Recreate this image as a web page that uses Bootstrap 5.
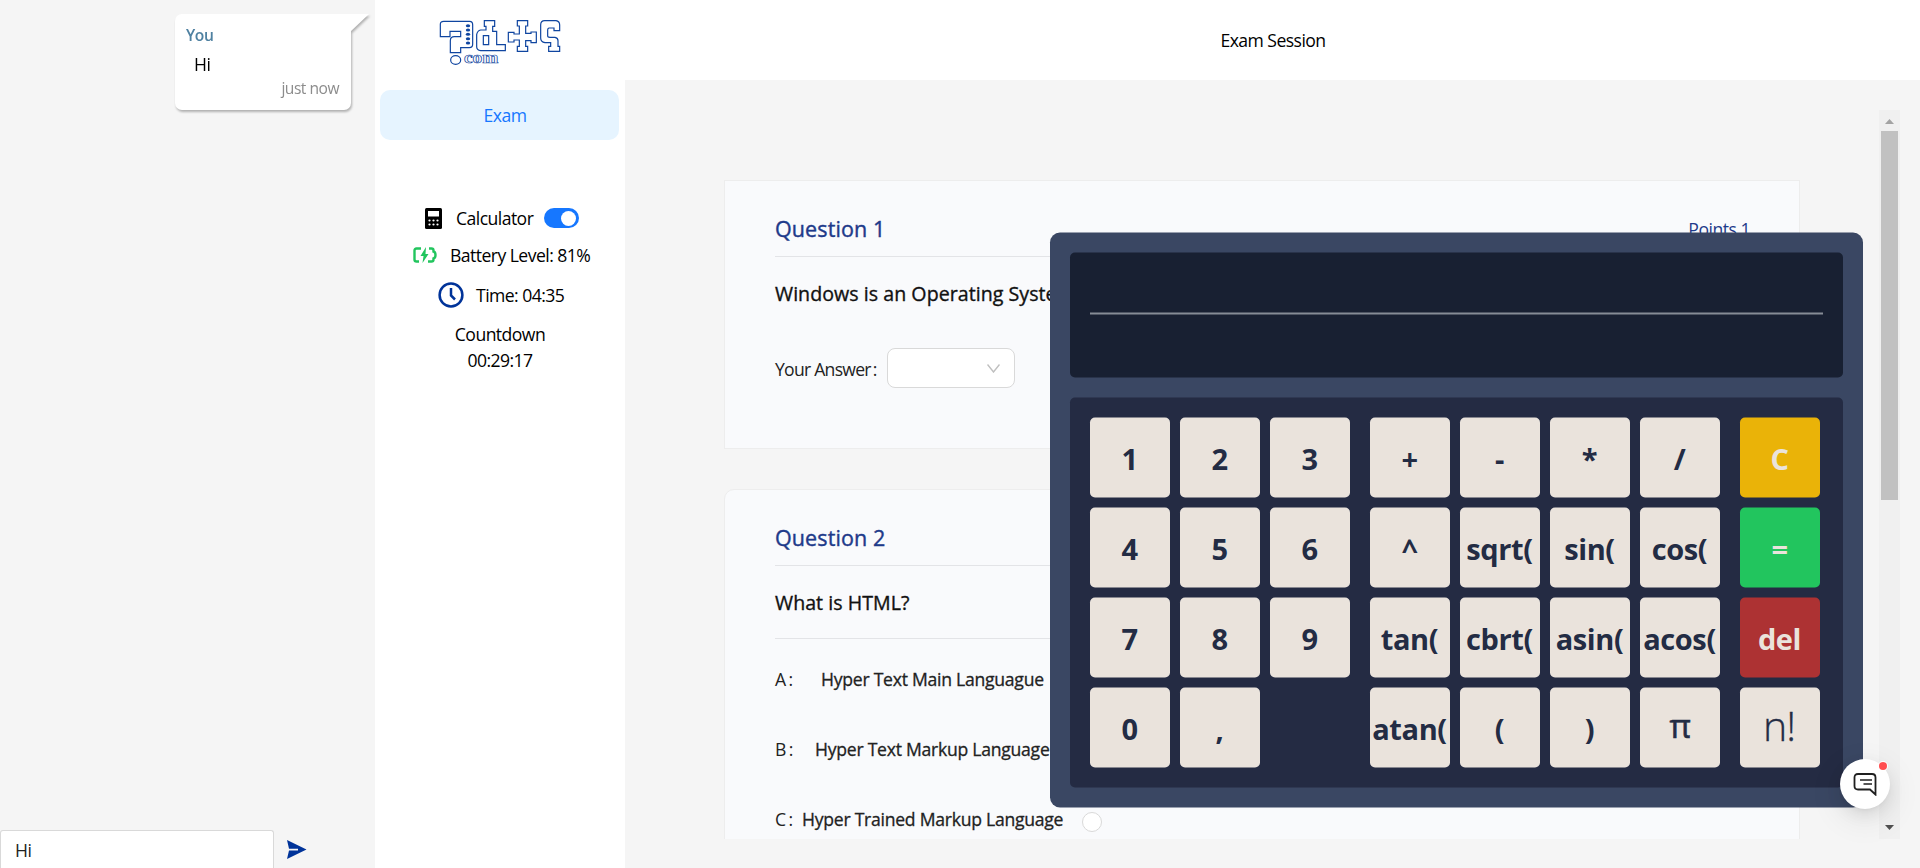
<!DOCTYPE html>
<html lang="en">
<head>
<meta charset="utf-8">
<title>Exam Session</title>
<link href="https://cdn.jsdelivr.net/npm/bootstrap@5.3.0/dist/css/bootstrap.min.css" rel="stylesheet">
<style>
body{font-family:"Open Sans","Noto Sans",sans-serif;font-size:17.6px;line-height:26px;color:#000;background:#f5f5f5;height:868px;overflow:hidden;letter-spacing:-.55px}
span{white-space:nowrap}
.chat-pane{width:375px}
.bubble{width:176px;height:96px;margin:14px 0 0 175px;border-radius:7px;padding:8px 12px;filter:drop-shadow(1px 2px 1px rgba(0,0,0,.28));line-height:27px}
.bubble svg{right:-18px;top:0}
.bubble .who{color:#4f81a1;font-size:15.6px;font-weight:600;letter-spacing:-.4px;margin-left:-1px}
.bubble .said{margin:2px 0 0 7px}
.bubble .when{color:#8c8c8c;font-size:15.6px;line-height:20px;letter-spacing:-.5px}
.composer input{width:274px;height:38px;border:1px solid #d9d9d9;border-bottom:0;border-radius:3px 3px 0 0;padding:1px 14px 0;font-size:17.6px;letter-spacing:-.4px;outline:0;color:#222}
.composer svg{margin:1px 0 0 13px}
.side{width:250px}
.side .logo{margin:10px 0 0 55px}
.side .pill{height:50px;margin:20px 6px 0 5px;padding-left:11px;border-radius:10px;background:#e6f4ff;color:#1677ff}
.tool{height:26px}
.tool-calc{margin:65px 0 0 50px;gap:14px}
.tool-calc span{width:74px}
.tool-power{margin:11px 0 0 38px;gap:13px}
.tool-clock{margin:14px 0 13px 63px;gap:12px}
.toggle{width:35px;height:20px;border-radius:10px;background:#1677ff;padding:2.5px 3px}
.toggle i{width:15px;height:15px;border-radius:50%;background:#fff}
.topbar{height:80px;padding-left:1px}
.scroller{height:729px;margin:30px 20px 0 0}
.rail{width:21px;background:#f0f0f0}
.rail .thumb{width:17px;height:369px;background:#c1c1c1}
.feed{padding:70px 79px 0 99px}
.quiz{background:#f9fafc;border:1px solid #ededed;padding:33px 49px 0 50px}
.quiz-1{height:269px}
.quiz-2{height:500px;margin-top:40px;border-radius:10px}
.quiz .rule{border-bottom:1px solid #e3e4e7}
.quiz .qhead{height:43px}
.quiz h2{font-size:21.5px;font-weight:400;line-height:30px;color:#1e3a8a;margin:0;letter-spacing:.1px;-webkit-text-stroke:.4px #1e3a8a}
.prompt{font-size:19.6px;color:#111;letter-spacing:.04px;-webkit-text-stroke:.35px #111;padding-top:24px}
.prompt.rule{height:73px}
.pts{color:#1e3a8a;line-height:30px;letter-spacing:-.5px}
.answer{margin-top:41px}
.answer label{width:112px;color:#222;letter-spacing:-.75px;padding-top:2px}
.answer label span{margin-left:2px}
.opts{padding-top:5px}
.opt{height:70px;color:#222}
.opt .tag span{margin-left:3px}
.opt .txt{letter-spacing:-.26px;-webkit-text-stroke:.3px #222}
.tag-a{width:46px}
.tag-b{width:40px}
.tag-c{width:27px}
.pick{width:128px;height:40px;border:1px solid #d9d9d9;border-radius:8px;padding-right:14px}
.dotring{width:20px;height:20px;border:1px solid #d9d9d9;border-radius:50%;margin:5px 0 0 19px}
.calc{left:1050px;top:232px;width:813px;height:575px;background:#3a4763;border-radius:10px;padding:20px;transform:translateY(.5px)}
.lcd{height:125px;background:#182032;border-radius:5px;padding:0 20px}
.lcd div{height:62px;border-bottom:2px solid #868c96}
.pad{height:390px;margin-top:20px;padding:20px;background:#242b43;border-radius:5px;gap:20px}
.keys{display:grid;gap:10px;grid-auto-rows:80px}
.k3{grid-template-columns:repeat(3,80px)}
.k4{grid-template-columns:repeat(4,80px)}
.k1{grid-template-columns:80px}
.key{border:0;padding:2px 1px 0 0;border-radius:5px;background:#eae3dc;color:#232c44;font-size:29px;font-weight:700;line-height:40px;letter-spacing:-.4px}
.key.clr{background:#eab308;color:#eae3dc}
.key.eq{background:#22c55e;color:#eae3dc}
.key.del{background:#ad3233;color:#eae3dc}
.key.pi{font-weight:400;font-size:33px;padding:0 0 5px;-webkit-text-stroke:.6px #232c44}
.key.fact{font-weight:300;font-size:41px;padding:0 2px 6px 0;letter-spacing:-1px;-webkit-text-stroke:.3px #232c44}
.fab{left:1840px;top:759px;width:50px;height:50px;box-shadow:0 6px 16px rgba(0,0,0,.08),0 3px 6px -4px rgba(0,0,0,.12),0 9px 28px 8px rgba(0,0,0,.05)}
.fab i{width:8px;height:8px;left:39px;top:3px;background:#ff4d4f;box-shadow:0 0 0 1px #fff}
</style>
</head>
<body class="d-flex position-relative">
<section class="chat-pane d-flex flex-column justify-content-between flex-shrink-0">
  <div class="bubble bg-white d-flex flex-column position-relative">
    <svg class="position-absolute" width="24" height="20"><path d="M0 0H24L5 18V20H0Z" fill="#fff"/></svg>
    <div class="who">You</div>
    <div class="said">Hi</div>
    <div class="when text-end">just now</div>
  </div>
  <div class="composer d-flex align-items-center">
    <input value="Hi" aria-label="Message">
    <svg width="20" height="20" viewBox="0 0 20 20"><path d="M0 0L19.500 9.500L0 19L2 10.500H11V8.700H2Z" fill="#003399"/></svg>
  </div>
</section>
<aside class="side bg-white flex-shrink-0 d-flex flex-column">
  <svg class="logo" width="140" height="60" viewBox="0 0 420 180" fill="none" stroke="#0f45a0" stroke-width="3.6">
    <path d="M31 80V43Q31 34 41 34H119Q128 34 128 44V103Q128 113 118 113H92V128H61V92Q61 80 73 80H92V64H60V80Z"/>
    <g fill="#0f45a0" stroke="none"><ellipse cx="114" cy="47" rx="6.500" ry="4.500"/><ellipse cx="114" cy="60" rx="6.500" ry="4.500"/><ellipse cx="114" cy="73" rx="6.500" ry="4.500"/><ellipse cx="114" cy="86" rx="6.500" ry="4.500"/><ellipse cx="114" cy="99" rx="6.500" ry="4.500"/></g>
    <ellipse cx="77" cy="150" rx="15" ry="13"/>
    <path d="M163 32H194V49H188V64H200V104H226V122H152Q140 120 140 110V74Q142 62 152 60H168V49H163ZM160 77H176V104H160Z"/>
    <path d="M262 32H293V48H287V70H303V66H319V98H303V92H287V109H293V124H262V109H268V90H252V96H235V67H252V72H268V48H262Z"/>
    <path d="M344 32H378Q389 34 389 45V62H372V54H357Q353 55 353 60V78Q353 82 360 82H375Q384 84 384 92V109H389V124H356V109H362V98H345Q332 96 332 84V45Q332 32 344 32Z"/>
    <text x="102" y="160" font-family="Liberation Serif,serif" font-weight="700" font-size="48" textLength="103" lengthAdjust="spacingAndGlyphs" letter-spacing="0" fill="#fff" stroke-width="2">com</text>
  </svg>
  <div class="pill d-flex align-items-center justify-content-center">Exam</div>
  <div class="tool tool-calc d-flex align-items-center">
    <svg width="17" height="21" viewBox="0 0 17 21"><rect width="17" height="21" rx="1.500"/><path d="M3 3H14V8.500H3Z" fill="#fff"/><g fill="#fff"><circle cx="4.500" cy="12.500" r="1.100"/><circle cx="8.500" cy="12.500" r="1.100"/><circle cx="12.500" cy="12.500" r="1.100"/><circle cx="4.500" cy="16.500" r="1.100"/><circle cx="8.500" cy="16.500" r="1.100"/><circle cx="12.500" cy="16.500" r="1.100"/></g></svg>
    <span>Calculator</span>
    <div class="toggle d-flex justify-content-end"><i></i></div>
  </div>
  <div class="tool tool-power d-flex align-items-center">
    <svg width="24" height="16" viewBox="0 0 24 16" fill="none" stroke="#22c55e" stroke-width="2.400"><path d="M8 1.500H3.500Q1.500 1.500 1.500 3.500V12.500Q1.500 14.500 3.500 14.500H6M16 1.500H18.500Q20.500 1.500 20.500 3.500V4.500Q22.500 5 22.500 8T20.500 11.500V12.500Q20.500 14.500 18.500 14.500H15"/><path d="M13 0L7.500 9H10.500L9.500 16L15.500 7H12.500Z" fill="#22c55e" stroke="none"/></svg>
    <span>Battery Level: 81%</span>
  </div>
  <div class="tool tool-clock d-flex align-items-center">
    <svg width="26" height="26" viewBox="0 0 26 26" fill="none" stroke="#003399" stroke-width="2.500"><circle cx="13" cy="13" r="11.400"/><path d="M13 6V13.500L17 17.500"/></svg>
    <span>Time: 04:35</span>
  </div>
  <div class="text-center">Countdown</div>
  <div class="text-center">00:29:17</div>
</aside>
<main class="flex-grow-1">
  <header class="topbar bg-white d-flex align-items-center justify-content-center">Exam Session</header>
  <div class="scroller d-flex overflow-hidden">
    <div class="feed flex-grow-1">
      <article class="quiz quiz-1">
        <div class="rule qhead d-flex justify-content-between"><h2>Question 1</h2><span class="pts">Points 1</span></div>
        <div class="prompt">Windows is an Operating System</div>
        <div class="answer d-flex align-items-center"><label>Your Answer<span>:</span></label>
          <div class="pick bg-white d-flex align-items-center justify-content-end"><svg width="13" height="9" viewBox="0 0 13 9" fill="none" stroke="#bfbfbf" stroke-width="1.400"><path d="M.5 .5L6.500 8L12.500 .5"/></svg></div></div>
      </article>
      <article class="quiz quiz-2">
        <div class="rule qhead"><h2>Question 2</h2></div>
        <div class="prompt rule">What is HTML?</div>
        <div class="opts">
          <div class="opt d-flex align-items-center"><div class="tag tag-a">A<span>:</span></div><span class="txt">Hyper Text Main Languague</span></div>
          <div class="opt d-flex align-items-center"><div class="tag tag-b">B<span>:</span></div><span class="txt">Hyper Text Markup Language</span></div>
          <div class="opt d-flex align-items-center"><div class="tag tag-c">C<span>:</span></div><span class="txt">Hyper Trained Markup Language</span><i class="dotring bg-white"></i></div>
        </div>
      </article>
    </div>
    <div class="rail d-flex flex-column align-items-center flex-shrink-0">
      <svg width="17" height="21"><path d="M4 14L8.500 9L13 14Z" fill="#a3a3a3"/></svg>
      <div class="thumb"></div>
      <svg class="mt-auto" width="17" height="21"><path d="M4 7L8.500 12L13 7Z" fill="#505050"/></svg>
    </div>
  </div>
</main>
<div class="calc position-absolute">
  <div class="lcd"><div></div></div>
  <div class="pad d-flex">
    <div class="keys k3"><button class="key">1</button><button class="key">2</button><button class="key">3</button><button class="key">4</button><button class="key">5</button><button class="key">6</button><button class="key">7</button><button class="key">8</button><button class="key">9</button><button class="key">0</button><button class="key">,</button></div>
    <div class="keys k4"><button class="key">+</button><button class="key">-</button><button class="key">*</button><button class="key">/</button><button class="key">^</button><button class="key">sqrt(</button><button class="key">sin(</button><button class="key">cos(</button><button class="key">tan(</button><button class="key">cbrt(</button><button class="key">asin(</button><button class="key">acos(</button><button class="key">atan(</button><button class="key">(</button><button class="key">)</button><button class="key pi">π</button></div>
    <div class="keys k1"><button class="key clr">C</button><button class="key eq">=</button><button class="key del">del</button><button class="key fact">n!</button></div>
  </div>
</div>
<div class="fab position-absolute bg-white rounded-circle d-flex align-items-center justify-content-center">
  <svg width="24" height="24" viewBox="0 0 24 24" fill="none" stroke="#1f1f1f" stroke-width="1.800"><path d="M22.500 22.500L17 17.500H5Q1.500 17.500 1.500 14V5.500Q1.500 2 5 2H19Q22.500 2 22.500 5.500Z"/><path d="M7 8H19M10.500 12H19" stroke-width="1.500"/></svg>
  <i class="position-absolute rounded-circle"></i>
</div>
<script src="https://cdn.jsdelivr.net/npm/bootstrap@5.3.0/dist/js/bootstrap.bundle.min.js"></script>
</body>
</html>
